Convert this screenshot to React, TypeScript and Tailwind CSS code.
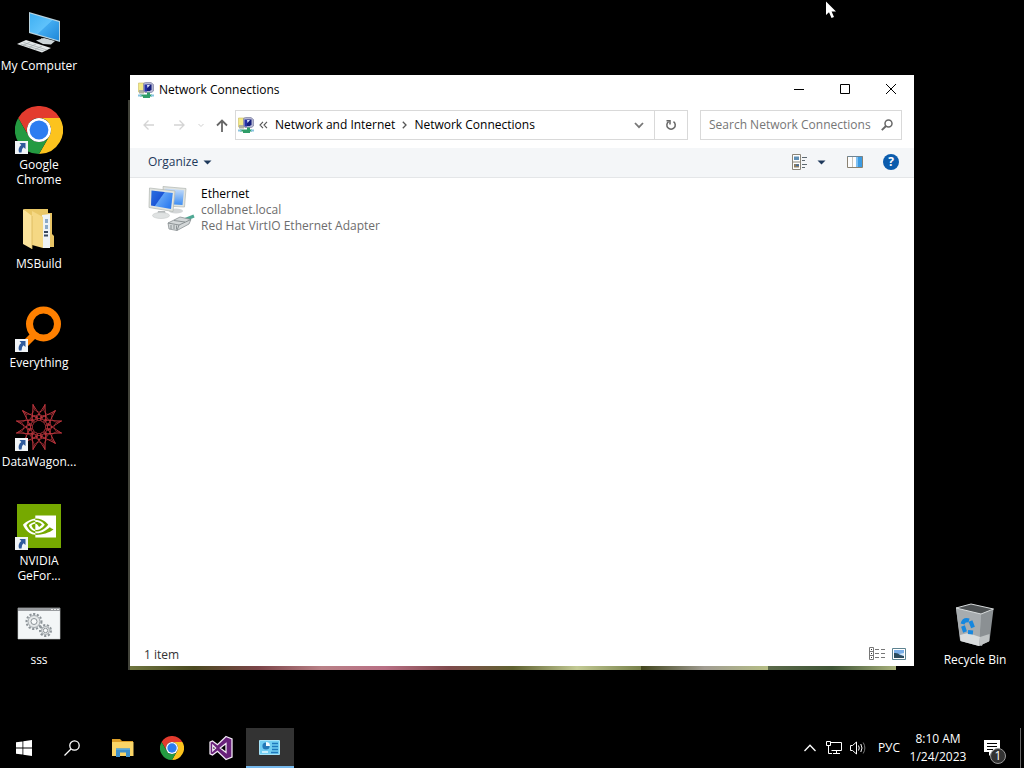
import type { ReactNode } from 'react';
import { SiNvidia } from 'react-icons/si';

function ChromeIcon({ size }: { size: number }) {
  return (
    <svg width={size} height={size} viewBox="0 0 48 48">
      <path d="M24 12 H44.8 A24 24 0 0 0 3.2 12 L13.6 30 A12 12 0 0 1 24 12Z" fill="#e33b2e" />
      <path d="M34.4 30 L24 48 A24 24 0 0 0 44.8 12 H24 A12 12 0 0 1 34.4 30Z" fill="#fcc31e" />
      <path d="M13.6 30 L3.2 12 A24 24 0 0 0 24 48 L34.4 30 A12 12 0 0 1 13.6 30Z" fill="#249a41" />
      <circle cx="24" cy="24" r="12" fill="#fff" />
      <circle cx="24" cy="24" r="9.4" fill="#2c7df0" />
    </svg>
  );
}

function ComputerIcon() {
  return (
    <svg width="48" height="48" viewBox="0 0 48 48">
      <defs>
        <linearGradient id="pc-screen" x1="0" y1="0" x2="1" y2="1">
          <stop offset="0" stopColor="#3fb0f3" />
          <stop offset="0.5" stopColor="#5fc2fb" />
          <stop offset="0.52" stopColor="#41aaf0" />
          <stop offset="1" stopColor="#1f87d8" />
        </linearGradient>
      </defs>
      <path d="M26 31 L32 33 L33 37 L26 35Z" fill="#9aa3a8" />
      <path d="M21 33.500 L29 31 L40 34 L36 37.500 L28 37Z" fill="#cdd5d8" />
      <path d="M14 5 L45 14 V35 L14 26Z" fill="#b9d3df" />
      <path d="M15 6.500 L44 15 V33.500 L15 25Z" fill="url(#pc-screen)" />
      <path d="M2 37 L11 33 L36 41 L27 45.500Z" fill="#e4e8e9" />
      <path d="M5.500 37 L29 44 M8.500 35.500 L32 43 M8 38.500 L15 35 M14 40.500 L21 37 M20 42.500 L27 39" stroke="#9ea6a8" strokeWidth="0.700" />
    </svg>
  );
}

function FolderIcon() {
  return (
    <svg width="48" height="48" viewBox="0 0 48 48">
      <path d="M9 4 H33 V40 H14Z" fill="#e9c766" />
      <path d="M34 8 H37 V29 L39 31 V42 H29 V8Z" fill="#e8c465" />
      <path d="M27 10 L35 9 V43 H28Z" fill="#eef3f5" />
      <path d="M30 14 h3 v4 h-3z M30 20 h3 v4 h-3z" fill="#8ba9c8" />
      <path d="M29 26 h4 v2 h-4z M29 29.500 h4 v2 h-4z" fill="#37475c" />
      <path d="M17 6 L28 12 V43 L17 40Z" fill="#f5d884" />
      <path d="M8 4 L17 11 V44 L8 39Z" fill="#fbe39b" />
      <path d="M17 11 V44" stroke="#d9b658" strokeWidth="0.800" />
    </svg>
  );
}

function EverythingIcon() {
  return (
    <svg width="48" height="48" viewBox="0 0 48 48">
      <path d="M18 32 L6 44" stroke="#ff8000" strokeWidth="7" />
      <circle cx="28.500" cy="20" r="14" fill="none" stroke="#ff8000" strokeWidth="7" />
    </svg>
  );
}

function DataWagonIcon() {
  const arms = Array.from({ length: 12 }, (_, i) => i * 30);
  return (
    <svg width="48" height="48" viewBox="0 0 48 48" fill="none" stroke="#c1373f" strokeWidth="0.900">
      {arms.map((angle) => (
        <g key={angle} transform={`rotate(${angle} 24 24)`}>
          <path d="M17.800 1.500 L28 17 M30.200 1.500 L20 17" />
          <path d="M17.800 1.500 Q18 8 24 9 Q30 8 30.200 1.500" opacity="0.600" />
          <circle cx="24" cy="14.500" r="3.200" opacity="0.800" />
        </g>
      ))}
    </svg>
  );
}

function NvidiaIcon() {
  return (
    <div className="m-0.5 flex size-11 items-center justify-center bg-[#76a900]">
      <SiNvidia size={33} color="#fff" />
    </div>
  );
}

function Gear({ cx, cy, r }: { cx: number; cy: number; r: number }) {
  return (
    <g transform={`translate(${cx} ${cy})`} fill="none" stroke="#8d9499">
      <circle r={r} strokeWidth="2" strokeDasharray="2.200 1.600" />
      <circle r={r - 1.500} fill="#e6e9ea" strokeWidth="0.800" />
      <circle r={r * 0.4} fill="#f8fafa" strokeWidth="1" />
    </g>
  );
}

function BatchFileIcon() {
  return (
    <svg width="48" height="48" viewBox="0 0 48 48">
      <path d="M3 7 H45 V38 H3Z" fill="#f3f6f7" stroke="#c9cdcf" strokeWidth="0.600" />
      <path d="M3 7 H45 V10 H3Z" fill="#9a9da0" />
      <path d="M36 8.500 h2 M39 8.500 h2 M42 8.500 h2" stroke="#e8e8e8" />
      <Gear cx={19} cy={20.500} r={7.500} />
      <Gear cx={30.500} cy={29.500} r={5.500} />
    </svg>
  );
}

function RecycleBinIcon() {
  return (
    <svg width="48" height="48" viewBox="0 0 48 48">
      <path d="M5 7 L9 39 L31 45 L42 10Z" fill="#a9aeb1" />
      <path d="M30 13 L42.500 8 L38.500 40 L28 45Z" fill="#8b9093" />
      <path d="M5 7 L30 13 L28 45 L9.500 40Z" fill="#a7acaf" />
      <path d="M9 34 L17 32 L29 36 L28 45 L9.500 40Z" fill="#d9dcdd" />
      <path d="M29 36 L38.500 33 L38 40.500 L28 45Z" fill="#bfc3c4" />
      <path d="M5 7 L20 3 L42.500 8 L30 13Z" fill="#4d5153" stroke="#d7dbdc" strokeWidth="1" />
      <g fill="none" stroke="#1687df" strokeWidth="4">
        <path d="M11.500 23 Q13 18 18 19.500" />
        <path d="M19.500 20 L22 26.500" />
        <path d="M22 31.500 L17 31" />
        <path d="M12 25 L14 31" />
      </g>
    </svg>
  );
}

function ShortcutArrow() {
  return (
    <svg className="absolute bottom-0 left-0" width="13" height="13" viewBox="0 0 13 13">
      <path d="M0 0 H13 V13 H0Z" fill="#f1f4f7" />
      <path d="M4.500 2 H10.500 V8 L8.500 6.300 Q6.300 8 6.500 11.500 H4 Q2.500 7 6.300 4Z" fill="#2f5a9c" />
    </svg>
  );
}

function NetworkIcon() {
  return (
    <svg width="16" height="16" viewBox="0 0 16 16">
      <path d="M0.500 1 H7 V10 H0.500Z" fill="#f3ea86" stroke="#c9bb62" strokeWidth="0.600" />
      <path d="M1 8 H6 V11.500 H1Z" fill="#aeb0a2" />
      <path d="M5.500 1.500 L7.500 0.500 H13 L15.500 2.500 V9 L13.500 10.500 H7 L5.500 9Z" fill="#b4b6d2" stroke="#7d7fa0" strokeWidth="0.700" />
      <path d="M6.500 2.500 H9 V9.500 H6.500Z" fill="#2430a8" />
      <path d="M9 2.500 H13.500 V7.500 L12 9 H9Z" fill="#151f7c" />
      <path d="M9 3 H12 L9.500 6Z" fill="#dbe4fd" />
      <path d="M9 10.500 H12 V12.500 H14 V14.500 H12 V16 H5 V14.500 H2 V12.500 H9Z" fill="#2f9d68" />
      <path d="M0 12.500 H3.500 V14.500 H0Z M13 12.500 H16 V14.500 H13Z" fill="#86c3e0" />
    </svg>
  );
}

function EthernetIcon() {
  return (
    <svg width="48" height="48" viewBox="0 0 48 48">
      <defs>
        <linearGradient id="lan-screen" x1="0" y1="0" x2="1" y2="0.600">
          <stop offset="0" stopColor="#2b6fe0" />
          <stop offset="0.480" stopColor="#1c55d6" />
          <stop offset="0.520" stopColor="#5fa2f6" />
          <stop offset="1" stopColor="#2f7df0" />
        </linearGradient>
        <linearGradient id="lan-screen-back" x1="0" y1="0" x2="0" y2="1">
          <stop offset="0" stopColor="#c9dffa" />
          <stop offset="1" stopColor="#3d8df2" />
        </linearGradient>
      </defs>
      <ellipse cx="28" cy="25" rx="7" ry="2.500" fill="#d3d6d7" />
      <path d="M15 0.500 L38 2.500 L36.500 21 L16 20Z" fill="#e0e3df" stroke="#b0b6b2" strokeWidth="0.700" />
      <path d="M17 2.500 L36 4.200 L34.500 19 L18 18Z" fill="url(#lan-screen-back)" />
      <path d="M10 25 H17 L18 29 H9Z" fill="#b6babb" />
      <ellipse cx="13" cy="29.500" rx="8.500" ry="3" fill="#dfe2e2" stroke="#c4c8c8" strokeWidth="0.600" />
      <path d="M1.500 2 L27 5 L25 25.500 L1 21.500Z" fill="#e3e5e0" stroke="#b0b6b2" strokeWidth="0.700" />
      <path d="M3.500 4.500 L24.800 7 L23 23 L3 19.500Z" fill="url(#lan-screen)" />
      <path d="M36 34 L46 30" stroke="#4fa894" strokeWidth="3" />
      <path d="M20 37 L32 31 L43 33.500 L41 38 L29 44.500 L21 43Z" fill="#d3d7d8" stroke="#8a9193" strokeWidth="0.800" />
      <path d="M20 37 L31 39 L43 33.500 M31 39 L29 44.500 M23 39 v4 M26 39 v4 M28.500 39.500 v4 M26 34.500 L37 36" stroke="#7a8284" strokeWidth="0.800" fill="none" />
    </svg>
  );
}

function VisualStudioIcon() {
  return (
    <svg width="26" height="26" viewBox="0 0 26 26">
      <path
        fillRule="evenodd"
        d="M18 1.500 L24 4 V22 L18 24.500 L9.500 16.300 L4.500 20 L2 18.800 V7.200 L4.500 6 L9.500 9.700Z M4.800 10.300 V15.700 L7.600 13Z M18 8.500 L12.300 13 L18 17.500Z"
        fill="#68217a"
        stroke="#f3e9f6"
        strokeWidth="1.300"
      />
    </svg>
  );
}

function Caret() {
  return (
    <svg width="9" height="5" viewBox="0 0 9 5">
      <path d="M0.500 0.500 H8.500 L4.500 4.500Z" fill="#1e395b" />
    </svg>
  );
}

interface DesktopItemProps {
  label: string;
  icon: ReactNode;
  shortcut?: boolean;
}

function DesktopItem({ label, icon, shortcut }: DesktopItemProps) {
  return (
    <button className="flex h-[99px] w-[78px] flex-col items-center pt-[7px] text-white">
      <span className="relative block size-12">
        {icon}
        {shortcut && <ShortcutArrow />}
      </span>
      <span className="mt-[3px] text-center leading-[15px] whitespace-pre-line">{label}</span>
    </button>
  );
}

const desktopItems: DesktopItemProps[] = [
  { label: 'My Computer', icon: <ComputerIcon /> },
  { label: 'Google\nChrome', icon: <ChromeIcon size={48} />, shortcut: true },
  { label: 'MSBuild', icon: <FolderIcon /> },
  { label: 'Everything', icon: <EverythingIcon />, shortcut: true },
  { label: 'DataWagon...', icon: <DataWagonIcon />, shortcut: true },
  { label: 'NVIDIA\nGeFor...', icon: <NvidiaIcon />, shortcut: true },
  { label: 'sss', icon: <BatchFileIcon /> },
];

function TitleBar() {
  const control = 'flex h-full w-[46px] items-center justify-center pb-0.5 hover:bg-gray-200';
  return (
    <header className="flex h-[30px] items-center pl-2">
      <NetworkIcon />
      <h1 className="ml-[5px] flex-1">Network Connections</h1>
      <button className={control} aria-label="Minimize">
        <svg width="10" height="10" viewBox="0 0 10 10" stroke="#000">
          <path d="M0 5.500 H10" />
        </svg>
      </button>
      <button className={control} aria-label="Maximize">
        <svg width="10" height="10" viewBox="0 0 10 10" stroke="#000" fill="none">
          <path d="M0.500 0.500 H9.500 V9.500 H0.500Z" />
        </svg>
      </button>
      <button className={control} aria-label="Close">
        <svg width="10" height="10" viewBox="0 0 10 10" stroke="#000">
          <path d="M0 0 L10 10 M10 0 L0 10" />
        </svg>
      </button>
    </header>
  );
}

function NavigationBar() {
  return (
    <div className="flex items-center pt-[5px] pr-3 pb-2 pl-3">
      <nav className="flex items-center gap-3 pr-[7px]" aria-label="History">
        <button aria-label="Back">
          <svg width="14" height="12" viewBox="0 0 14 12" fill="none" stroke="#d4d4d4" strokeWidth="1.300">
            <path d="M12 6 H2 M6.500 1.500 L2 6 L6.500 10.500" />
          </svg>
        </button>
        <button className="ml-1" aria-label="Forward">
          <svg width="14" height="12" viewBox="0 0 14 12" fill="none" stroke="#d4d4d4" strokeWidth="1.300">
            <path d="M2 6 H12 M7.500 1.500 L12 6 L7.500 10.500" />
          </svg>
        </button>
        <button aria-label="Recent locations">
          <svg width="6" height="5" viewBox="0 0 6 5" fill="none" stroke="#cfcfcf">
            <path d="M0.500 1 L3 3.500 L5.500 1" />
          </svg>
        </button>
        <button aria-label="Up">
          <svg width="12" height="13" viewBox="0 0 12 13" fill="none" stroke="#666" strokeWidth="1.800">
            <path d="M6 13 V1.500 M1 6.500 L6 1.500 L11 6.500" />
          </svg>
        </button>
      </nav>
      <div className="flex h-[30px] flex-1 items-center border border-[#d9d9d9]">
        <span className="ml-0.5">
          <NetworkIcon />
        </span>
        <button className="ml-[5px]" aria-label="Show parent locations">
          <svg width="9" height="8" viewBox="0 0 9 8" fill="none" stroke="#555" strokeWidth="1.100">
            <path d="M4 0.800 L1 4 L4 7.200 M8 0.800 L5 4 L8 7.200" />
          </svg>
        </button>
        <button className="ml-[7px]">Network and Internet</button>
        <svg className="mx-[7px]" width="5" height="8" viewBox="0 0 5 8" fill="none" stroke="#555" strokeWidth="1.300">
          <path d="M0.800 0.800 L4 4 L0.800 7.200" />
        </svg>
        <button>Network Connections</button>
        <button className="ml-auto flex h-full w-[31px] items-center justify-center" aria-label="Previous locations">
          <svg width="10" height="7" viewBox="0 0 10 7" fill="none" stroke="#777" strokeWidth="1.800">
            <path d="M1 1 L5 5.200 L9 1" />
          </svg>
        </button>
        <button className="flex h-full w-[33px] items-center justify-center border-l border-[#d9d9d9]" aria-label="Refresh">
          <svg width="12" height="12" viewBox="0 0 12 12" fill="none" stroke="#666" strokeWidth="1.500">
            <path d="M8.500 2.600 A4.200 4.200 0 1 1 3.600 2.600" />
            <path d="M1.500 1.800 H5 V5.500" />
          </svg>
        </button>
      </div>
      <label className="ml-3 flex h-[30px] w-[202px] items-center border border-[#d9d9d9] px-2">
        <input
          className="min-w-0 flex-1 outline-none placeholder:text-[#767676]"
          type="text"
          placeholder="Search Network Connections"
          aria-label="Search Network Connections"
        />
        <svg width="12" height="12" viewBox="0 0 12 12" fill="none" stroke="#666">
          <circle cx="7.500" cy="4.500" r="3.500" strokeWidth="1.500" />
          <path d="M5 7 L0.800 11.200" strokeWidth="1.900" />
        </svg>
      </label>
    </div>
  );
}

function CommandBar() {
  return (
    <div className="flex h-[30px] items-center border-b border-[#e4e6e8] bg-[#f4f6f8] pr-[15px] pb-px pl-[18px] text-[#1e395b]">
      <button className="flex items-center gap-[5px]">
        Organize
        <Caret />
      </button>
      <button className="ml-auto" aria-label="Change your view">
        <svg width="16" height="16" viewBox="0 0 16 16">
          <path d="M0.500 0.500 H8.500 V15.500 H0.500Z M0.500 8 H8.500" fill="#fff" stroke="#8b8578" />
          <path d="M2 2.500 H7 V6 H2Z" fill="#5f8fb4" />
          <path d="M2 10 H7 V13.500 H2Z" fill="#8d7e62" />
          <path d="M4 10.500 h3 v1.500 h-3z" fill="#3f6ba0" />
          <path d="M10 3.500 H15 M10 6.500 H13 M10 10.500 H15 M10 13.500 H13" stroke="#5d6870" />
        </svg>
      </button>
      <button className="ml-[9px]" aria-label="More view options">
        <Caret />
      </button>
      <button className="ml-[21px]" aria-label="Show the preview pane">
        <svg width="16" height="12" viewBox="0 0 16 12">
          <path d="M0.500 0.500 H15.500 V11.500 H0.500Z" fill="#fdfdfd" stroke="#8a8272" />
          <path d="M0.500 0.500 H15.500" stroke="#6d8596" />
          <path d="M5.500 1 V11" stroke="#c8c4ba" />
          <path d="M9 1 H15 V11 H9Z" fill="#3c9be2" />
          <path d="M9 1 H11 V11 H9Z" fill="#7fc0f2" />
        </svg>
      </button>
      <button
        className="ml-5 flex size-4 items-center justify-center rounded-full bg-[#0b5cad] leading-4 font-bold text-white"
        aria-label="Get help"
      >
        ?
      </button>
    </div>
  );
}

function StatusBar() {
  return (
    <footer className="flex h-[23px] items-center pr-2 pl-[14px] text-[#333]">
      <span className="flex-1">1 item</span>
      <button className="mb-0.5" aria-label="Details view">
        <svg width="17" height="13" viewBox="0 0 17 13" fill="none">
          <path d="M0.500 0.500 H4.500 V12.500 H0.500Z M0.500 4.500 H4.500 M0.500 8.500 H4.500" stroke="#777" />
          <path d="M2 2.500 h1 M2 6.500 h1 M2 10.500 h1" stroke="#333" />
          <path d="M6 2.500 h4 M12 2.500 h4 M6 6.500 h4 M12 6.500 h4 M6 10.500 h4 M12 10.500 h4" stroke="#777" />
        </svg>
      </button>
      <button className="mb-0.5 ml-1.5" aria-label="Large icons view">
        <svg width="14" height="12" viewBox="0 0 14 12">
          <path d="M0.500 0.500 H13.500 V11.500 H0.500Z" fill="#fff" stroke="#5c8290" />
          <path d="M2 2 H12 V10 H2Z" fill="#79aee8" />
          <path d="M2 5 Q6 4.500 8 7 L12 8 V10 H2Z" fill="#2c4c5e" />
          <path d="M7 6 L12 5 V8Z" fill="#dcebf7" />
        </svg>
      </button>
    </footer>
  );
}

function ExplorerWindow() {
  return (
    <main className="absolute top-[75px] right-[110px] bottom-[62px] left-[130px] flex flex-col bg-white text-black">
      <TitleBar />
      <NavigationBar />
      <CommandBar />
      <section className="flex-1 pt-2 pl-[18px]">
        <button className="flex gap-[5px] text-left leading-4">
          <EthernetIcon />
          <span className="text-[#6d6d6d]">
            <span className="block text-black">Ethernet</span>
            <span className="block">collabnet.local</span>
            <span className="block">Red Hat VirtIO Ethernet Adapter</span>
          </span>
        </button>
      </section>
      <StatusBar />
    </main>
  );
}

function Taskbar() {
  const task = 'flex h-10 w-12 items-center justify-center';
  const tray = 'flex w-6 items-center justify-center';
  return (
    <footer className="flex h-10 bg-black text-white">
      <button className={task} aria-label="Start">
        <svg width="16" height="16" viewBox="0 0 16 16" fill="#fff">
          <path d="M0 2.300 L6.500 1.400 V7.600 H0Z M7.300 1.300 L16 0 V7.600 H7.300Z M0 8.400 H6.500 V14.600 L0 13.700Z M7.300 8.400 H16 V16 L7.300 14.700Z" />
        </svg>
      </button>
      <button className={task} aria-label="Search">
        <svg width="16" height="16" viewBox="0 0 16 16" fill="none" stroke="#fff" strokeWidth="1.300">
          <circle cx="10.500" cy="5.500" r="4.700" />
          <path d="M7 9 L0.500 15.500" />
        </svg>
      </button>
      <div className="ml-[3px] flex gap-px">
        <button className={task} aria-label="File Explorer">
          <svg width="22" height="18" viewBox="0 0 22 18">
            <path d="M0 0 H8 L10 2 H21 V4 H0Z" fill="#dd9f28" />
            <path d="M0 3 H21.500 V17 H0Z" fill="#fad567" />
            <path d="M4 9.500 H18 V18 H14 V13.500 H8 V18 H4Z" fill="#3d8fca" />
            <path d="M4 9.500 H18 V11 H4Z" fill="#57a9dd" />
          </svg>
        </button>
        <button className={task} aria-label="Google Chrome">
          <ChromeIcon size={24} />
        </button>
        <button className={task} aria-label="Visual Studio">
          <VisualStudioIcon />
        </button>
        <button
          className="flex h-10 w-12 items-center justify-center border-b-2 border-[#76b9ed] bg-[#333] pt-0.5"
          aria-label="Network Connections"
        >
          <svg width="22" height="16" viewBox="0 0 22 16">
            <path d="M0.500 0.500 H20.500 V14.500 H0.500Z" fill="#71cdf1" stroke="#a5e2f8" />
            <circle cx="7" cy="6" r="3.600" fill="#2478b8" />
            <path d="M7 6 V2 A4 4 0 0 1 11 6Z" fill="#f4fbff" />
            <path d="M13 3.500 H19 M13 6.500 H19 M13 9.500 H19 M12 12.500 H19" stroke="#1f78bd" strokeWidth="1.300" />
            <path d="M3 12 H9" stroke="#e6f8ff" strokeWidth="1.500" />
          </svg>
        </button>
      </div>
      <div className="ml-auto flex">
        <button className={tray} aria-label="Show hidden icons">
          <svg width="12" height="8" viewBox="0 0 12 8" fill="none" stroke="#fff" strokeWidth="1.300">
            <path d="M0.500 7 L6 1.200 L11.500 7" />
          </svg>
        </button>
        <button className={tray} aria-label="Network">
          <svg width="16" height="14" viewBox="0 0 16 14" fill="none" stroke="#fff">
            <path d="M5 1.500 H15.500 V9.500 H5.500 M10.500 9.500 V12.500 M7 12.500 H14" />
            <path d="M0.500 0.500 H4.500 V4.500 H0.500Z M2.500 4.500 V12.500 H6" />
          </svg>
        </button>
        <button className={tray} aria-label="Volume">
          <svg width="16" height="14" viewBox="0 0 16 14" fill="none" stroke="#fff">
            <path d="M0.500 4.500 H2.500 L6.500 1 V13 L2.500 9.500 H0.500Z" />
            <path d="M8.500 4.500 Q10 7 8.500 9.500 M10.800 3 Q13.200 7 10.800 11" />
            <path d="M13.200 1.500 Q16.500 7 13.200 12.500" stroke="#777" />
          </svg>
        </button>
        <button className="w-[38px]">РУС</button>
        <button className="w-[60px] leading-[18px] whitespace-nowrap">
          8:10 AM
          <br />
          1/24/2023
        </button>
        <button className="relative mr-1 flex w-12 items-center justify-center" aria-label="Notifications">
          <svg width="16" height="17" viewBox="0 0 16 17">
            <path d="M0 0 H16 V12 H9 L5 16 V12 H0Z" fill="#fff" />
            <path d="M3 3.500 H13 M3 6.500 H13 M3 9.500 H9" stroke="#000" />
          </svg>
          <span className="absolute right-2.5 bottom-1 flex size-4 items-center justify-center rounded-full border border-[#999] bg-[#333]">
            1
          </span>
        </button>
        <button className="w-1 border-l border-[#666]" aria-label="Show desktop" />
      </div>
    </footer>
  );
}

export default function App() {
  return (
    <div className="flex h-screen flex-col overflow-hidden bg-black font-['Open_Sans','Noto_Sans',sans-serif] text-[12px]">
      <div className="relative flex flex-1 justify-between">
        <div>
          {desktopItems.map((item) => (
            <DesktopItem key={item.label} {...item} />
          ))}
        </div>
        <div className="flex flex-col justify-end pr-2.5 pb-[35px]">
          <DesktopItem label="Recycle Bin" icon={<RecycleBinIcon />} />
        </div>

        {/* Edge of the window that sits behind the active one */}
        <div className="absolute top-[100px] right-[128px] bottom-[58px] left-[128px] flex items-end border-l-2 border-[#42433a]">
          <div className="h-1 w-1/6 bg-linear-to-r from-[#6f7640] via-[#4b4a20] to-[#7b4448]" />
          <div className="h-1 w-1/6 bg-linear-to-r from-[#7b4448] via-[#b98187] to-[#b86f84]" />
          <div className="h-1 w-1/6 bg-linear-to-r from-[#b86f84] via-[#7f4a4c] to-[#5f6130]" />
          <div className="h-1 w-1/6 bg-linear-to-r from-[#5f6130] via-[#c3ca94] to-[#77804a]" />
          <div className="h-1 w-1/6 bg-linear-to-r from-[#42451c] via-[#a19d92] to-[#b5bd84]" />
          <div className="h-1 w-1/6 bg-linear-to-r from-[#5b6a4a] via-[#3f5436] to-[#a9b27c]" />
        </div>

        <ExplorerWindow />
      </div>
      <Taskbar />

      {/* Mouse pointer */}
      <svg className="pointer-events-none absolute top-px left-[825px]" width="12" height="19" viewBox="0 0 12 19">
        <path d="M1 0.500 V14 L4 11.200 L6.500 17 L9 16 L6.600 10.400 H11Z" fill="#fff" />
      </svg>
    </div>
  );
}
